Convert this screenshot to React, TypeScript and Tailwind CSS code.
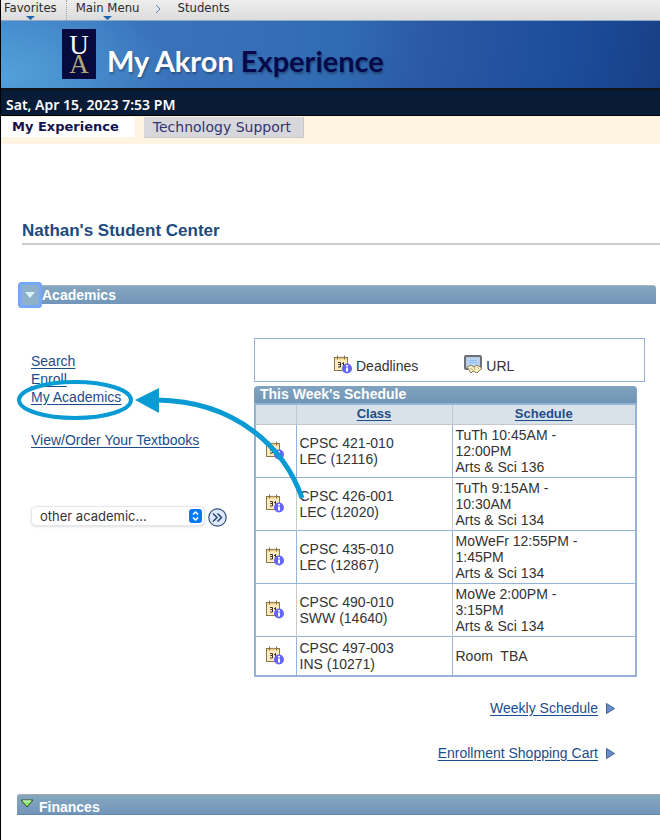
import React from "react";

type ClassRow = { course: string; section: string; times: string[]; tall: boolean };

const rows: ClassRow[] = [
  { course: "CPSC 421-010", section: "LEC (12116)", times: ["TuTh 10:45AM -", "12:00PM", "Arts & Sci 136"], tall: true },
  { course: "CPSC 426-001", section: "LEC (12020)", times: ["TuTh 9:15AM -", "10:30AM", "Arts & Sci 134"], tall: true },
  { course: "CPSC 435-010", section: "LEC (12867)", times: ["MoWeFr 12:55PM -", "1:45PM", "Arts & Sci 134"], tall: true },
  { course: "CPSC 490-010", section: "SWW (14640)", times: ["MoWe 2:00PM -", "3:15PM", "Arts & Sci 134"], tall: true },
  { course: "CPSC 497-003", section: "INS (10271)", times: ["Room\u00a0 TBA"], tall: false },
];

const link = "text-[#1d4c8c] underline underline-offset-2";

function CalendarIcon() {
  return (
    <svg width="18" height="19" viewBox="0 0 18 19" className="shrink-0" aria-hidden="true">
      <rect x="0.5" y="2.5" width="13" height="13" fill="#fdebbd" stroke="#8a7647" />
      <path d="M1 3h12v1.500H1z" fill="#f3d084" />
      <path d="M3.500 0.500v4M10.500 0.500v4" stroke="#80735a" />
      <path d="M6 1.500v2M8 1.500v2" stroke="#b3a57f" />
      <path d="M4 7.500h2.500v2h-2h2v2.500h-2.500M9.500 12v-4.500l-1.500 1.500" fill="none" stroke="#333" />
      <circle cx="13" cy="13.500" r="5" fill="#6464ff" />
      <path d="M13 10v1.500M13 12.500v4" stroke="#fff" strokeWidth="2" />
    </svg>
  );
}

function UrlIcon() {
  return (
    <svg width="19" height="19" viewBox="0 0 19 19" className="shrink-0" aria-hidden="true">
      <rect x="1" y="1" width="16" height="13" rx="1" fill="#a9cdf5" stroke="#6b7076" strokeWidth="2" />
      <rect x="3" y="3" width="12" height="9" fill="#b5d6fb" stroke="#c5cbd1" />
      <path d="M5 5.500h8M5 7.500h8" stroke="#8fbcf0" />
      <path d="M3 12l4-2 3 2 3-2 5 3-5 5-4-2-2 2z" fill="#fbf0c2" stroke="#8a7d55" />
      <path d="M10 12l1 3M6 13l3 2M13 12l2 2" stroke="#b3a678" />
    </svg>
  );
}

function PlayMark() {
  return (
    <svg width="10" height="11" viewBox="0 0 10 11" aria-hidden="true">
      <path d="M0.500 0.500v10l8-5z" fill="#6b8fcb" stroke="#3f5f95" />
    </svg>
  );
}

function MenuMark() {
  return (
    <svg width="9" height="4" viewBox="0 0 9 4" aria-hidden="true">
      <path d="M0 0h9L4.500 4z" fill="#1f66b0" />
    </svg>
  );
}

function TopNav() {
  return (
    <nav className="flex h-[21px] items-start border-b border-[#8fa9c8] bg-linear-to-b from-[#eeeeee] to-[#dcdcdc] font-['DejaVu_Sans_Condensed','DejaVu_Sans',sans-serif] text-[13px] leading-4 text-[#2a2a2a]">
      <button className="flex flex-col items-center pr-[9px] pl-[3px]">
        <span>Favorites</span>
        <MenuMark />
      </button>
      <button className="flex flex-col items-center border-l border-dotted border-gray-400 pl-[9px]">
        <span>Main Menu</span>
        <MenuMark />
      </button>
      <svg width="6" height="10" viewBox="0 0 6 10" className="mx-4 mt-1" aria-hidden="true">
        <path d="M1 1l4 4-4 4" fill="none" stroke="#5a83bb" />
      </svg>
      <a href="#students">Students</a>
    </nav>
  );
}

function Banner() {
  return (
    <header className="flex h-[69px] gap-[11px] border-b-2 border-[#111318] bg-[radial-gradient(ellipse_170px_90px_at_0%_80%,#52a0d9_0%,transparent_100%),linear-gradient(100deg,#3f80c6_0%,#3a74bb_20%,#3870b8_35%,#306bb1_52%,#2b59a5_64%,#1c4d9b_85%,#183f86_100%)] pt-2 pl-[61px]">
      <svg width="34" height="50" viewBox="0 0 34 50" className="shrink-0" aria-hidden="true">
        <rect width="34" height="50" fill="#060a3c" />
        <text x="17" y="25" textAnchor="middle" fontSize="27" fontFamily="Liberation Serif, serif" fill="#fff">U</text>
        <text x="17" y="44" textAnchor="middle" fontSize="27" fontFamily="Liberation Serif, serif" fill="#b3a57a">A</text>
      </svg>
      <h1 className="pt-4 font-['Lato',sans-serif] text-[29px] leading-8 font-bold whitespace-nowrap text-white text-shadow-[1px_2px_2px_rgb(0_0_0/0.3)]">
        My Akron <span className="text-[#060a4c]">Experience</span>
      </h1>
    </header>
  );
}

function Tabs() {
  return (
    <div className="flex h-7 items-start gap-[9px] bg-[#fff4e2] pt-px font-['DejaVu_Sans',sans-serif] leading-5">
      <button className="bg-white pr-4 pl-[11px] text-[13px] font-bold text-[#12124f]">My Experience</button>
      <button className="border-r border-b border-[#c8c8c8] bg-[#d8d8dc] pr-3 pl-[9px] text-[14px] text-[#34346c]">Technology Support</button>
    </div>
  );
}

function AcademicLinks() {
  return (
    <div className="w-[223px] shrink-0 pt-[14px] text-[14px] leading-[18px]">
      <ul>
        <li><a href="#search" className={link}>Search</a></li>
        <li><a href="#enroll" className={link}>Enroll</a></li>
        <li><a href="#academics" className={link}>My Academics</a></li>
      </ul>
      <a href="#textbooks" className={link + " mt-[25px] block"}>View/Order Your Textbooks</a>
      <div className="mt-[55px] flex items-center gap-[3px]">
        <div className="grid items-center">
          <select aria-label="Other academic" className="col-start-1 row-start-1 h-5 w-[174px] appearance-none rounded-[5px] border border-gray-200 bg-white pl-2 font-['Inter',sans-serif] text-[13px] leading-4 text-[#333] shadow-sm">
            <option>other academic...</option>
          </select>
          <svg width="13" height="14" viewBox="0 0 13 14" className="pointer-events-none col-start-1 row-start-1 mr-[3px] justify-self-end" aria-hidden="true">
            <rect width="13" height="14" rx="3" fill="#087aff" />
            <path d="M4 5.500l2.500-2.500L9 5.500M4 8.500l2.500 2.500L9 8.500" fill="none" stroke="#fff" strokeWidth="1.500" />
          </svg>
        </div>
        <button aria-label="Go" className="mt-1">
          <svg width="19" height="19" viewBox="0 0 19 19">
            <circle cx="9.500" cy="9.500" r="8.700" fill="#dfe9fa" stroke="#35517f" strokeWidth="1.200" />
            <path d="M5 5.500l4 4-4 4M9.500 5.500l4 4-4 4" fill="none" stroke="#24457e" strokeWidth="1.500" />
          </svg>
        </button>
      </div>
    </div>
  );
}

function Schedule() {
  return (
    <div className="mr-2">
      <h3 className="h-[17px] rounded-t-[4px] border-x border-[#7fa0bf] bg-linear-to-b from-[#81a3bf] to-[#7095b6] pl-[5px] text-[14px] leading-4 font-bold text-white">This Week's Schedule</h3>
      <table className="w-full table-fixed border-collapse border-2 border-[#94b3d6] text-[14px] leading-4 text-[#333]">
        <colgroup>
          <col className="w-[41px]" />
          <col className="w-[156px]" />
          <col />
        </colgroup>
        <thead>
          <tr className="h-5 bg-[#dae2e9] text-[13px]">
            <th className="border border-[#c3c8cd]" />
            <th className="border border-[#c3c8cd] p-0"><a href="#class" className={link}>Class</a></th>
            <th className="border border-[#c3c8cd] p-0"><a href="#schedule" className={link}>Schedule</a></th>
          </tr>
        </thead>
        <tbody>
          {rows.map((r) => (
            <tr key={r.course} className={(r.tall ? "h-[53px]" : "h-10") + " border-y border-[#94b3d6] [&>td]:border-x [&>td]:border-[#94b3d6] even:[&>td]:border-[#c9c9c9]"}>
              <td className="p-0 pl-[10px]"><CalendarIcon /></td>
              <td className="p-0 pl-[3px]">{r.course}<br />{r.section}</td>
              <td className="p-0 pl-[3px]">
                {r.times.map((t) => <div key={t}>{t}</div>)}
              </td>
            </tr>
          ))}
        </tbody>
      </table>
    </div>
  );
}

function Callout() {
  return (
    <svg width="320" height="130" viewBox="0 0 320 130" className="pointer-events-none absolute top-[92px] left-0" aria-hidden="true">
      <ellipse cx="74" cy="23" rx="56" ry="18" fill="none" stroke="#0a9bd5" strokeWidth="4" />
      <path d="M156 23C236 24 284 72 301 121" fill="none" stroke="#0a9bd5" strokeWidth="5" />
      <path d="M134 23l24-12v25z" fill="#0a9bd5" />
    </svg>
  );
}

export default function App() {
  return (
    <div className="min-h-screen border-l border-black bg-white font-['Liberation_Sans',Arial,sans-serif]">
      <TopNav />
      <Banner />
      <div className="h-[26px] border-b border-black bg-[#081b37] pt-[5px] pl-[5px] font-['Noto_Sans',sans-serif] text-[14px] leading-5 font-semibold text-white">
        Sat, Apr 15, 2023 7:53 PM
      </div>
      <Tabs />
      <main className="pt-[77px]">
        <h2 className="ml-[21px] border-b-2 border-[#cbcbcb] pb-[2px] text-[17px] leading-5 font-bold text-[#204a80]">Nathan's Student Center</h2>
        <section className="relative mt-10">
          <div className="mr-1 ml-[18px] flex h-[19px] items-center rounded-tr-[3px] border-t border-[#a9b3bc] bg-linear-to-b from-[#84a7c0] to-[#7395b8]">
            <button aria-label="Collapse Academics" className="-ml-px flex h-[26px] w-6 shrink-0 items-center justify-center rounded-[4px] bg-[#8fb0cb] ring-3 ring-[#77a7fa] ring-inset">
              <svg width="10" height="6" viewBox="0 0 10 6" aria-hidden="true"><path d="M0 0h10L5 6z" fill="#d9f3fb" /></svg>
            </button>
            <h3 className="text-[14px] leading-5 font-bold text-white">Academics</h3>
          </div>
          <div className="flex pt-[34px] pl-[30px]">
            <AcademicLinks />
            <div className="mr-[15px] min-w-0 flex-1">
              <div className="mb-1 flex h-11 items-center border border-[#94b3d6] pt-2 pl-[79px] text-[14px] leading-4 text-[#333]">
                <CalendarIcon /><span className="mt-1 ml-1">Deadlines</span>
                <span className="ml-[46px] flex items-center"><UrlIcon /><span className="mt-1 ml-[3px]">URL</span></span>
              </div>
              <Schedule />
              <div className="mr-[29px] flex flex-col items-end gap-[27px] pt-[22px] text-[14px] leading-[18px]">
                <div className="flex items-center gap-2"><a href="#weekly" className={link}>Weekly Schedule</a><PlayMark /></div>
                <div className="flex items-center gap-2"><a href="#cart" className={link}>Enrollment Shopping Cart</a><PlayMark /></div>
              </div>
            </div>
          </div>
          <Callout />
        </section>
        <section className="mt-8 ml-4">
          <div className="flex h-[21px] gap-[5px] rounded-tl-[3px] border-t border-[#a9a9ad] border-b border-b-[#6088b4] bg-linear-to-b from-[#84a7c0] to-[#7395b8] pl-[3px]">
            <button aria-label="Expand Finances" className="self-start pt-1">
              <svg width="14" height="9" viewBox="0 0 14 9" aria-hidden="true"><path d="M1 1h12L7 8z" fill="#8eea72" stroke="#31551f" /><path d="M3 2h8" stroke="#e9ffe0" /></svg>
            </button>
            <h3 className="pt-[2px] text-[14px] leading-5 font-bold text-white">Finances</h3>
          </div>
        </section>
      </main>
    </div>
  );
}
